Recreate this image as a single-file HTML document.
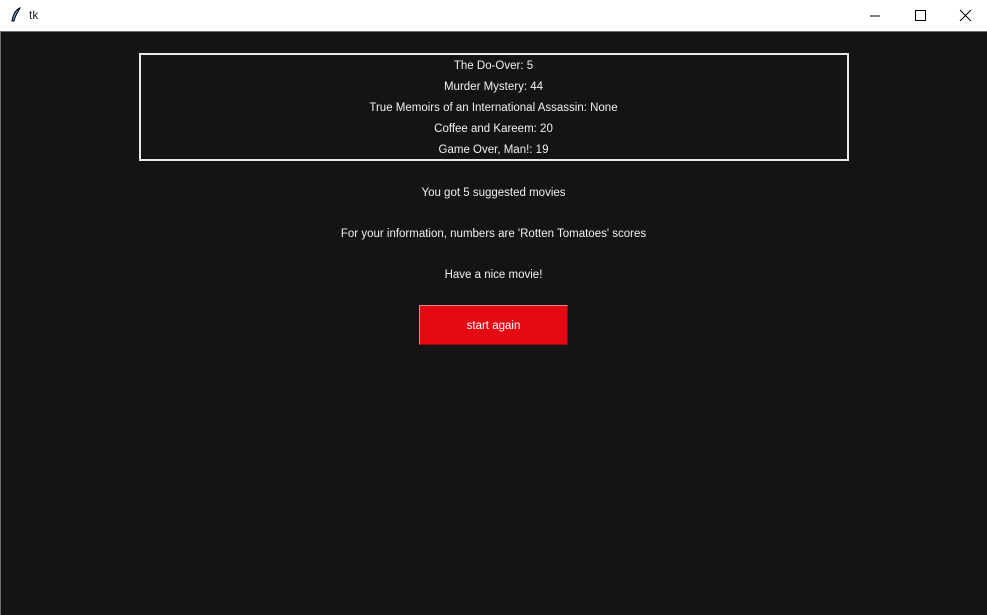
<!DOCTYPE html>
<html><head><style>
body{margin:0;width:987px;height:615px;overflow:hidden;background:#141414;font-family:"Liberation Sans",sans-serif;position:relative}
#tb{position:absolute;left:0;top:0;width:987px;height:31px;background:#fff;border-bottom:1px solid #6e6e6e}
#lb{position:absolute;left:0;top:32px;width:1px;height:583px;background:#6e6e6e}
.t{position:absolute;left:0;width:987px;text-align:center;color:#f0f0f0;font-size:11.5px;line-height:14px}
#box{position:absolute;left:139px;top:53px;width:706px;height:104px;border:2px solid #e8e8e8}
#btn{position:absolute;left:419px;top:305px;width:149px;height:40px;background:#e50914;border-top:1px solid #f08080;border-left:1px solid #f08080;border-bottom:1px solid #a00008;border-right:1px solid #a00008;box-sizing:border-box;color:#fff;font-size:11.5px;text-align:center;line-height:40px}
</style></head><body>
<div id="tb">
<svg style="position:absolute;left:10px;top:7px" width="12" height="16"><path d="M10 1 C5 3 3 8 2 14 L4 14 C5 9 8 5 10 1Z" fill="#6a9ae0" stroke="#000" stroke-width="1"/></svg>
<span style="position:absolute;left:29px;top:8px;font-size:12px;color:#222">tk</span>
<svg style="position:absolute;left:868px;top:9px" width="14" height="14"><path d="M2 7H12" stroke="#000"/></svg>
<svg style="position:absolute;left:914px;top:9px" width="14" height="14"><rect x="1.5" y="1.5" width="10" height="10" fill="none" stroke="#000"/></svg>
<svg style="position:absolute;left:959px;top:9px" width="14" height="14"><path d="M1 1L12 12M12 1L1 12" stroke="#000"/></svg>
</div>
<div id="lb"></div>
<div id="box"></div>
<div class="t" style="top:59px">The Do-Over: 5</div>
<div class="t" style="top:80px">Murder Mystery: 44</div>
<div class="t" style="top:101px">True Memoirs of an International Assassin: None</div>
<div class="t" style="top:122px">Coffee and Kareem: 20</div>
<div class="t" style="top:143px">Game Over, Man!: 19</div>
<div class="t" style="top:186px">You got 5 suggested movies</div>
<div class="t" style="top:227px">For your information, numbers are 'Rotten Tomatoes' scores</div>
<div class="t" style="top:268px">Have a nice movie!</div>
<div id="btn">start again</div>
</body></html>
